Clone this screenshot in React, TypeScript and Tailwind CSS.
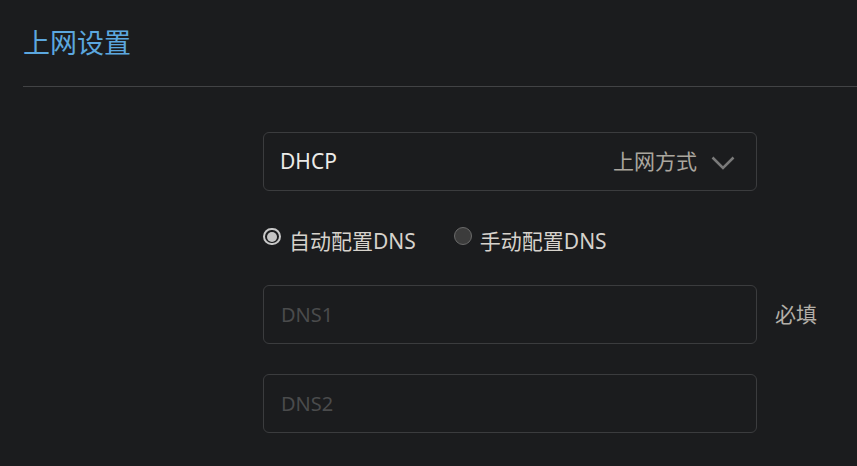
import React, { useState } from 'react';

const font = "font-['Noto_Sans','Noto_Sans_CJK_SC',sans-serif]";

const Radio: React.FC<{ checked: boolean; label: string; onClick: () => void }> = ({ checked, label, onClick }) => (
    <button onClick={onClick} className="flex items-start gap-[8px]">
        {checked ? (
            <span className="mt-[1px] w-[18px] h-[17px] rounded-full border-[2px] border-[#c8c8c8] bg-[#1b1c1e] flex items-center justify-center">
                <span className="w-[10px] h-[10px] rounded-full bg-[#c4c4c4]"></span>
            </span>
        ) : (
            <span className="mt-0 w-[18px] h-[18px] rounded-full border-[1.5px] border-[#6a6a6a] bg-[#3c3c3c]"></span>
        )}
        <span className="text-[21px] leading-[28px] text-[#d6d2cc]">{label}</span>
    </button>
);

const App: React.FC = () => {
    const [mode, setMode] = useState<'auto' | 'manual'>('auto');

    return (
        <div className={`w-[857px] h-[466px] bg-[#1b1c1e] overflow-hidden ${font}`}>
            {/* header */}
            <div className="pl-[23px] pt-[24px]">
                <h1 className="text-[27px] leading-[38px] text-[#5ba7df]">上网设置</h1>
                <div className="mt-[24px] h-px bg-[#424345]"></div>
            </div>

            <div className="pl-[263px] pt-[45px]">
                {/* connection type */}
                <div className="w-[494px] h-[59px] rounded-[6px] border border-[#3b3c3e] flex items-center pl-[16px] pr-[21px]">
                    <span className="text-[21px] text-[#ecebe8]">DHCP</span>
                    <span className="ml-auto text-[21px] text-[#aaa69f]">上网方式</span>
                    <svg width="24" height="14" viewBox="0 0 24 14" className="ml-[14px] mt-[2px]">
                        <path d="M1.5 1.5 L12 12 L22.5 1.5" fill="none" stroke="#7a7a7a" strokeWidth="2.5" />
                    </svg>
                </div>

                {/* dns mode */}
                <div className="flex gap-[38px] mt-[36px]">
                    <Radio checked={mode === 'auto'} label="自动配置DNS" onClick={() => setMode('auto')} />
                    <Radio checked={mode === 'manual'} label="手动配置DNS" onClick={() => setMode('manual')} />
                </div>

                {/* dns inputs */}
                <div className="flex items-center mt-[30px]">
                    <input
                        type="text"
                        placeholder="DNS1"
                        disabled={mode === 'auto'}
                        className="w-[494px] h-[59px] rounded-[6px] border border-[#3b3c3e] bg-transparent px-[17px] text-[20px] text-[#ecebe8] placeholder:text-[#4a4b4c] outline-none"
                    />
                    <span className="ml-[18px] text-[21px] text-[#b3afa8]">必填</span>
                </div>
                <div className="mt-[30px]">
                    <input
                        type="text"
                        placeholder="DNS2"
                        disabled={mode === 'auto'}
                        className="w-[494px] h-[59px] rounded-[6px] border border-[#3b3c3e] bg-transparent px-[17px] text-[20px] text-[#ecebe8] placeholder:text-[#4a4b4c] outline-none"
                    />
                </div>
            </div>
        </div>
    );
};

export default App;
